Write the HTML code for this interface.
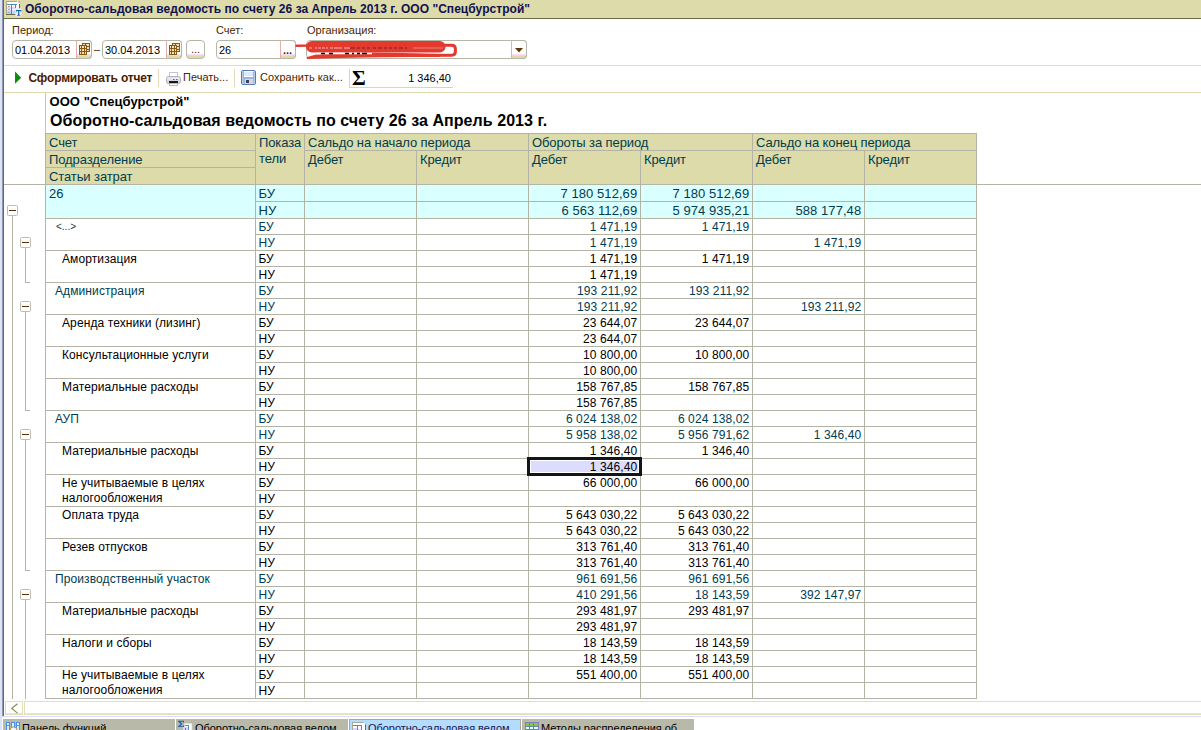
<!DOCTYPE html>
<html><head><meta charset="utf-8"><title>1C</title>
<style>
*{box-sizing:border-box;margin:0;padding:0}
html,body{width:1201px;height:730px;overflow:hidden;background:#fff}
body{font-family:"Liberation Sans",sans-serif;font-size:11px;color:#000;position:relative}
.a{position:absolute}
.t{position:absolute;white-space:nowrap;line-height:1}
.ui{color:#4a2600;font-size:11px}
.hl{position:absolute;height:1px;background:#b4b4a6}
.vl{position:absolute;width:1px;background:#b4b4a6}
.inp{position:absolute;border:1px solid #b6b6a6;border-radius:4px;background:#fff;height:19px}
.btn{position:absolute;border:1px solid #b6b6a6;border-left-color:#e4b0a8;border-radius:0 4px 4px 0;background:linear-gradient(#fff 0,#fff 76.4%,#ffd8fc 76.5%,#ffd8fc 82.3%,#ffd8b0 82.4%,#ffd8b0 88.2%,#dcdca8 88.3%,#dcdca8 100%)}
.btn2{position:absolute;border:1px solid #b6b6a6;border-radius:4px;background:linear-gradient(#fff 0,#fff 76.4%,#ffd8fc 76.5%,#ffd8fc 82.3%,#ffd8b0 82.4%,#ffd8b0 88.2%,#dcdca8 88.3%,#dcdca8 100%)}
.h{position:absolute;white-space:nowrap;line-height:1;font-size:13px;color:#003c50;letter-spacing:-0.1px}
.c{position:absolute;white-space:nowrap;line-height:1;font-size:12px}
.n{position:absolute;white-space:nowrap;line-height:1;font-size:12px;text-align:right;width:108px}
.g{color:#003c50}
.bx{position:absolute;width:11px;height:11px;border:1px solid #bebcac;border-radius:1.5px;background:#fff}
.bx i{position:absolute;left:1px;top:4px;width:7px;height:1px;background:#5a2d0a}
.tab{position:absolute;top:719px;height:11px;background:#b9b9a9}
.tab span{position:absolute;top:4px;white-space:nowrap;font-size:11px;line-height:1;color:#000;letter-spacing:-0.05px}
</style></head><body>

<div class="a" style="left:0;top:0;width:2px;height:716px;background:#d7e5f4"></div>
<div class="a" style="left:2px;top:0;width:1px;height:716px;background:#9494b4"></div>
<div class="a" style="left:3px;top:0;width:1px;height:716px;background:#6a6a50"></div>
<div class="a" style="left:4px;top:0;width:1197px;height:18px;background:#dcdba9"></div>
<div class="a" style="left:4px;top:18px;width:1197px;height:1px;background:#6e6d48"></div>
<div class="t" style="left:25px;top:3px;font-size:12px;font-weight:bold;color:#101050;letter-spacing:0.04px">Оборотно-сальдовая ведомость по счету 26 за Апрель 2013 г. ООО "Спецбурстрой"</div>
<svg class="a" style="left:4px;top:0px" width="20" height="18" viewBox="4 0 20 18">
<rect x="6" y="1" width="14" height="14" fill="#fff"/>
<rect x="6.5" y="1.5" width="13" height="13" fill="none" stroke="#aaa89a"/>
<rect x="7" y="7" width="9" height="2" fill="#dcd8ff"/><rect x="7" y="10" width="9" height="1" fill="#dcd8ff"/>
<rect x="7" y="11" width="9" height="3" fill="#b4e0ff"/>
<rect x="8" y="6" width="2" height="1" fill="#a8a898"/><rect x="8" y="9" width="2" height="1" fill="#a8a898"/><rect x="8" y="12" width="2" height="1" fill="#a8a898"/>
<rect x="7" y="4" width="10" height="1" fill="#5a8cb0"/>
<rect x="11" y="4" width="1" height="4" fill="#5a8cb0"/><rect x="11" y="8" width="1" height="6" fill="#7068c0"/>
<rect x="15" y="4" width="1" height="4" fill="#5a8cb0"/>
<rect x="6" y="14" width="9" height="1" fill="#6a6a48"/>
<path d="M17 1h1l2 2v1h-3z" fill="#fff"/><path d="M18 1.5l2 2" stroke="#8888c8" stroke-width="0.8"/>
<rect x="19" y="4" width="1" height="4" fill="#6a6a48"/>
<rect x="15.5" y="8.5" width="6" height="8" fill="#ece8ff"/>
<path d="M16 10h5.4v1.6h-0.8l-0.3-0.7h-1v3.9l0.9 0.3v0.6h-3v-0.6l0.9-0.3v-3.9h-1l-0.3 0.7h-0.8z" fill="#1068a8"/>
</svg>
<div class="t ui" style="left:12px;top:25px">Период:</div>
<div class="t ui" style="left:216px;top:25px">Счет:</div>
<div class="t ui" style="left:307px;top:25px">Организация:</div>
<div class="inp" style="left:12px;top:40px;width:80px"></div>
<div class="btn" style="left:76px;top:40px;width:16px;height:19px"></div>
<svg class="a" style="left:79px;top:43px" width="12" height="12" viewBox="0 0 12 12"><rect x="3.5" y="0.5" width="7" height="8" fill="#f3e2b8" stroke="#8a5a14"/><path d="M3 3.5h8M3 6.5h8M6.5 0v9" stroke="#8a5a14" stroke-width="1"/><rect x="0.5" y="2.5" width="7" height="9" fill="#f3e2b8" stroke="#8a5a14"/><path d="M0 5.5h8M0 8.5h8M2.5 3v9M5.5 3v9" stroke="#8a5a14" stroke-width="1"/></svg>
<div class="t" style="left:15px;top:45px;font-size:11px">01.04.2013</div>
<div class="t" style="left:94px;top:44px;font-size:11px;color:#4a2600">–</div>
<div class="inp" style="left:102px;top:40px;width:80px"></div>
<div class="btn" style="left:166px;top:40px;width:16px;height:19px"></div>
<svg class="a" style="left:169px;top:43px" width="12" height="12" viewBox="0 0 12 12"><rect x="3.5" y="0.5" width="7" height="8" fill="#f3e2b8" stroke="#8a5a14"/><path d="M3 3.5h8M3 6.5h8M6.5 0v9" stroke="#8a5a14" stroke-width="1"/><rect x="0.5" y="2.5" width="7" height="9" fill="#f3e2b8" stroke="#8a5a14"/><path d="M0 5.5h8M0 8.5h8M2.5 3v9M5.5 3v9" stroke="#8a5a14" stroke-width="1"/></svg>
<div class="t" style="left:105px;top:45px;font-size:11px">30.04.2013</div>
<div class="btn2" style="left:186px;top:40px;width:19px;height:19px"></div>
<div class="t ui" style="left:191px;top:44px">...</div>
<div class="inp" style="left:216px;top:40px;width:80px"></div>
<div class="btn" style="left:280px;top:40px;width:16px;height:19px"></div>
<div class="t ui" style="left:283px;top:45px;font-weight:bold">...</div>
<div class="t" style="left:219px;top:45px;font-size:11px">26</div>
<div class="inp" style="left:306px;top:40px;width:221px"></div>
<div class="btn" style="left:511px;top:40px;width:16px;height:19px"></div>
<svg class="a" style="left:515px;top:48px" width="8" height="5"><path d="M0 0h8l-4 4.5z" fill="#5a3a08"/></svg>
<svg class="a" style="left:290px;top:36px" width="175" height="26" viewBox="290 36 175 26">
<path d="M296.5 45.8 L309 45.6" stroke="#e33a2f" stroke-width="2.4" stroke-linecap="round" fill="none"/>
<path d="M311.8 46.75 L439.8 46.75" stroke="#e33a2f" stroke-width="11.5" stroke-linecap="round" fill="none"/>
<path d="M440 45.2 L451.5 45.2 Q455.4 45.2 455.4 49 L455.4 51.6 Q455.4 55.3 451.5 55.3 L416 55.4" stroke="#e33a2f" stroke-width="3" stroke-linejoin="round" fill="none"/>
<path d="M307 59 L306.5 57.2 L316 54.6 L370 52.6 L416 53.2 L440 54 L440 56.7 L380 57.2 L340 58 Z" fill="#e33a2f"/>
<path d="M316 53.6 H372" stroke="#fff" stroke-width="1.5" fill="none"/>
<path d="M321 53.6 h4 m4 0 h4 m12 0 h4 m3 0 h2 m3 0 h3 m2 0 h5" stroke="#100" stroke-width="1.5" fill="none"/>
<path d="M309 48 h3 m3 0 h2 m1 0 h3 m1 0 h3 m1 0 h2 m2 0 h3 m1 0 h8 m2 0 h6" stroke="#f2c4be" stroke-width="0.9" fill="none"/>
<path d="M350 48 h5 m2 0 h3 m2 0 h3 m2 0 h3 m3 0 h3 m2 0 h4 m2 0 h3 m2 0 h3 m2 0 h3 m2 0 h4 m2 0 h2" stroke="#6a1814" stroke-width="0.8" fill="none"/>
<path d="M413 48 H443" stroke="#f0b0a8" stroke-width="0.6" fill="none"/>
</svg>
<div class="a" style="left:4px;top:65px;width:1197px;height:1px;background:#d6d6f2"></div>
<svg class="a" style="left:14px;top:71px" width="8" height="14"><path d="M1 0.6v12.2l6.2-6.1z" fill="#0e8e0e"/></svg>
<div class="t" style="left:28.5px;top:72px;font-size:12px;font-weight:bold;color:#4a1c00;letter-spacing:-0.18px">Сформировать отчет</div>
<div class="a" style="left:158px;top:69px;width:1px;height:18px;background:#e4d8b8"></div>
<svg class="a" style="left:166px;top:72px" width="15" height="14" viewBox="0 0 15 14">
<rect x="3.5" y="0.5" width="8" height="5" fill="#fff" stroke="#c4c4cc"/>
<rect x="0.5" y="4.5" width="14" height="7" rx="2" fill="#d8d8e0" stroke="#b4b0bc"/>
<rect x="1.5" y="5.5" width="12" height="2" fill="#ececf2"/>
<rect x="3" y="9" width="9" height="2" fill="#181818"/>
<rect x="7" y="7" width="1.5" height="1" fill="#e03020"/><rect x="10" y="7" width="1.5" height="1" fill="#20a030"/>
<rect x="3.5" y="11.5" width="8" height="2" fill="#fff" stroke="#b8b8c8"/>
</svg>
<div class="t ui" style="left:183px;top:72px">Печать...</div>
<div class="a" style="left:234px;top:69px;width:1px;height:18px;background:#e4d8b8"></div>
<svg class="a" style="left:241px;top:70px" width="15" height="15" viewBox="0 0 15 15">
<rect x="0.5" y="0.5" width="14" height="14" rx="1.5" fill="#9ab4e0" stroke="#5a78b8"/>
<rect x="1.5" y="1.5" width="12" height="12" fill="none" stroke="#b8ccec"/>
<rect x="3" y="1" width="9" height="6" fill="#fff"/>
<rect x="3" y="2.5" width="9" height="1" fill="#b8d8f4"/><rect x="3" y="4.5" width="9" height="1" fill="#b8d8f4"/>
<rect x="4" y="9" width="8" height="5" fill="#d4d8e0"/>
<rect x="5" y="10" width="3" height="3" fill="#3a4458"/>
</svg>
<div class="t ui" style="left:260px;top:72px">Сохранить как...</div>
<div class="a" style="left:349px;top:69px;width:104px;height:19px;border-left:1px solid #dcd8a8;border-bottom:1px solid #dcd8a8"></div>
<div class="t" style="left:352px;top:68px;font-size:21px;font-weight:bold;font-family:'Liberation Serif',serif">Σ</div>
<div class="t" style="left:351px;top:73px;width:100px;text-align:right;font-size:11px">1 346,40</div>
<div class="a" style="left:4px;top:92px;width:1197px;height:1px;background:#dedcb0"></div>
<div class="t" style="left:49.5px;top:95px;font-size:13px;font-weight:bold;letter-spacing:0.05px">ООО "Спецбурстрой"</div>
<div class="t" style="left:50px;top:113px;font-size:16px;font-weight:bold;letter-spacing:0.06px">Оборотно-сальдовая ведомость по счету 26 за Апрель 2013 г.</div>
<div class="a" style="left:45px;top:133px;width:932px;height:52px;background:#dcdba9"></div>
<div class="a" style="left:45px;top:185px;width:932px;height:33px;background:#daffff"></div>
<div class="hl" style="left:45px;top:133px;width:932px"></div>
<div class="hl" style="left:45px;top:150px;width:210px"></div>
<div class="hl" style="left:304px;top:150px;width:673px"></div>
<div class="hl" style="left:45px;top:167px;width:210px"></div>
<div class="hl" style="left:4px;top:184px;width:1197px"></div>
<div class="hl" style="left:255px;top:201px;width:722px"></div>
<div class="c g" style="left:49px;top:187px;font-size:13px;letter-spacing:0.1px">26</div>
<div class="c g" style="left:258.5px;top:187px;font-size:13px">БУ</div>
<div class="n g" style="left:529.2px;top:187px;font-size:13px;letter-spacing:0.06px">7 180 512,69</div>
<div class="n g" style="left:641.2px;top:187px;font-size:13px;letter-spacing:0.06px">7 180 512,69</div>
<div class="hl" style="left:45px;top:218px;width:932px"></div>
<div class="c g" style="left:258.5px;top:204px;font-size:13px">НУ</div>
<div class="n g" style="left:529.2px;top:204px;font-size:13px;letter-spacing:0.06px">6 563 112,69</div>
<div class="n g" style="left:641.2px;top:204px;font-size:13px;letter-spacing:0.06px">5 974 935,21</div>
<div class="n g" style="left:753.2px;top:204px;font-size:13px;letter-spacing:0.06px">588 177,48</div>
<div class="hl" style="left:255px;top:234px;width:722px"></div>
<div class="c g" style="left:56px;top:222px;font-size:10px">&lt;...&gt;</div>
<div class="c g" style="left:258.5px;top:221px;font-size:12px">БУ</div>
<div class="n g" style="left:529.4px;top:221px;font-size:12px;letter-spacing:0.12px">1 471,19</div>
<div class="n g" style="left:641.4px;top:221px;font-size:12px;letter-spacing:0.12px">1 471,19</div>
<div class="hl" style="left:45px;top:250px;width:932px"></div>
<div class="c g" style="left:258.5px;top:237px;font-size:12px">НУ</div>
<div class="n g" style="left:529.4px;top:237px;font-size:12px;letter-spacing:0.12px">1 471,19</div>
<div class="n g" style="left:753.4px;top:237px;font-size:12px;letter-spacing:0.12px">1 471,19</div>
<div class="hl" style="left:255px;top:266px;width:722px"></div>
<div class="c " style="left:62px;top:253px;font-size:12px;letter-spacing:0.1px">Амортизация</div>
<div class="c " style="left:258.5px;top:253px;font-size:12px">БУ</div>
<div class="n " style="left:529.4px;top:253px;font-size:12px;letter-spacing:0.12px">1 471,19</div>
<div class="n " style="left:641.4px;top:253px;font-size:12px;letter-spacing:0.12px">1 471,19</div>
<div class="hl" style="left:45px;top:282px;width:932px"></div>
<div class="c " style="left:258.5px;top:269px;font-size:12px">НУ</div>
<div class="n " style="left:529.4px;top:269px;font-size:12px;letter-spacing:0.12px">1 471,19</div>
<div class="hl" style="left:255px;top:298px;width:722px"></div>
<div class="c g" style="left:55px;top:285px;font-size:12px;letter-spacing:0.1px">Администрация</div>
<div class="c g" style="left:258.5px;top:285px;font-size:12px">БУ</div>
<div class="n g" style="left:529.4px;top:285px;font-size:12px;letter-spacing:0.12px">193 211,92</div>
<div class="n g" style="left:641.4px;top:285px;font-size:12px;letter-spacing:0.12px">193 211,92</div>
<div class="hl" style="left:45px;top:314px;width:932px"></div>
<div class="c g" style="left:258.5px;top:301px;font-size:12px">НУ</div>
<div class="n g" style="left:529.4px;top:301px;font-size:12px;letter-spacing:0.12px">193 211,92</div>
<div class="n g" style="left:753.4px;top:301px;font-size:12px;letter-spacing:0.12px">193 211,92</div>
<div class="hl" style="left:255px;top:330px;width:722px"></div>
<div class="c " style="left:62px;top:317px;font-size:12px;letter-spacing:0.1px">Аренда техники (лизинг)</div>
<div class="c " style="left:258.5px;top:317px;font-size:12px">БУ</div>
<div class="n " style="left:529.4px;top:317px;font-size:12px;letter-spacing:0.12px">23 644,07</div>
<div class="n " style="left:641.4px;top:317px;font-size:12px;letter-spacing:0.12px">23 644,07</div>
<div class="hl" style="left:45px;top:346px;width:932px"></div>
<div class="c " style="left:258.5px;top:333px;font-size:12px">НУ</div>
<div class="n " style="left:529.4px;top:333px;font-size:12px;letter-spacing:0.12px">23 644,07</div>
<div class="hl" style="left:255px;top:362px;width:722px"></div>
<div class="c " style="left:62px;top:349px;font-size:12px;letter-spacing:0.1px">Консультационные услуги</div>
<div class="c " style="left:258.5px;top:349px;font-size:12px">БУ</div>
<div class="n " style="left:529.4px;top:349px;font-size:12px;letter-spacing:0.12px">10 800,00</div>
<div class="n " style="left:641.4px;top:349px;font-size:12px;letter-spacing:0.12px">10 800,00</div>
<div class="hl" style="left:45px;top:378px;width:932px"></div>
<div class="c " style="left:258.5px;top:365px;font-size:12px">НУ</div>
<div class="n " style="left:529.4px;top:365px;font-size:12px;letter-spacing:0.12px">10 800,00</div>
<div class="hl" style="left:255px;top:394px;width:722px"></div>
<div class="c " style="left:62px;top:381px;font-size:12px;letter-spacing:0.1px">Материальные расходы</div>
<div class="c " style="left:258.5px;top:381px;font-size:12px">БУ</div>
<div class="n " style="left:529.4px;top:381px;font-size:12px;letter-spacing:0.12px">158 767,85</div>
<div class="n " style="left:641.4px;top:381px;font-size:12px;letter-spacing:0.12px">158 767,85</div>
<div class="hl" style="left:45px;top:410px;width:932px"></div>
<div class="c " style="left:258.5px;top:397px;font-size:12px">НУ</div>
<div class="n " style="left:529.4px;top:397px;font-size:12px;letter-spacing:0.12px">158 767,85</div>
<div class="hl" style="left:255px;top:426px;width:722px"></div>
<div class="c g" style="left:55px;top:413px;font-size:12px;letter-spacing:0.1px">АУП</div>
<div class="c g" style="left:258.5px;top:413px;font-size:12px">БУ</div>
<div class="n g" style="left:529.4px;top:413px;font-size:12px;letter-spacing:0.12px">6 024 138,02</div>
<div class="n g" style="left:641.4px;top:413px;font-size:12px;letter-spacing:0.12px">6 024 138,02</div>
<div class="hl" style="left:45px;top:442px;width:932px"></div>
<div class="c g" style="left:258.5px;top:429px;font-size:12px">НУ</div>
<div class="n g" style="left:529.4px;top:429px;font-size:12px;letter-spacing:0.12px">5 958 138,02</div>
<div class="n g" style="left:641.4px;top:429px;font-size:12px;letter-spacing:0.12px">5 956 791,62</div>
<div class="n g" style="left:753.4px;top:429px;font-size:12px;letter-spacing:0.12px">1 346,40</div>
<div class="hl" style="left:255px;top:458px;width:722px"></div>
<div class="c " style="left:62px;top:445px;font-size:12px;letter-spacing:0.1px">Материальные расходы</div>
<div class="c " style="left:258.5px;top:445px;font-size:12px">БУ</div>
<div class="n " style="left:529.4px;top:445px;font-size:12px;letter-spacing:0.12px">1 346,40</div>
<div class="n " style="left:641.4px;top:445px;font-size:12px;letter-spacing:0.12px">1 346,40</div>
<div class="hl" style="left:45px;top:474px;width:932px"></div>
<div class="c " style="left:258.5px;top:461px;font-size:12px">НУ</div>
<div class="hl" style="left:255px;top:490px;width:722px"></div>
<div class="c " style="left:62px;top:477px;font-size:12px;letter-spacing:0.1px">Не учитываемые в целях</div>
<div class="c " style="left:258.5px;top:477px;font-size:12px">БУ</div>
<div class="n " style="left:529.4px;top:477px;font-size:12px;letter-spacing:0.12px">66 000,00</div>
<div class="n " style="left:641.4px;top:477px;font-size:12px;letter-spacing:0.12px">66 000,00</div>
<div class="hl" style="left:45px;top:506px;width:932px"></div>
<div class="c " style="left:62px;top:492px;font-size:12px;letter-spacing:0.1px">налогообложения</div>
<div class="c " style="left:258.5px;top:493px;font-size:12px">НУ</div>
<div class="hl" style="left:255px;top:522px;width:722px"></div>
<div class="c " style="left:62px;top:509px;font-size:12px;letter-spacing:0.1px">Оплата труда</div>
<div class="c " style="left:258.5px;top:509px;font-size:12px">БУ</div>
<div class="n " style="left:529.4px;top:509px;font-size:12px;letter-spacing:0.12px">5 643 030,22</div>
<div class="n " style="left:641.4px;top:509px;font-size:12px;letter-spacing:0.12px">5 643 030,22</div>
<div class="hl" style="left:45px;top:538px;width:932px"></div>
<div class="c " style="left:258.5px;top:525px;font-size:12px">НУ</div>
<div class="n " style="left:529.4px;top:525px;font-size:12px;letter-spacing:0.12px">5 643 030,22</div>
<div class="n " style="left:641.4px;top:525px;font-size:12px;letter-spacing:0.12px">5 643 030,22</div>
<div class="hl" style="left:255px;top:554px;width:722px"></div>
<div class="c " style="left:62px;top:541px;font-size:12px;letter-spacing:0.1px">Резев отпусков</div>
<div class="c " style="left:258.5px;top:541px;font-size:12px">БУ</div>
<div class="n " style="left:529.4px;top:541px;font-size:12px;letter-spacing:0.12px">313 761,40</div>
<div class="n " style="left:641.4px;top:541px;font-size:12px;letter-spacing:0.12px">313 761,40</div>
<div class="hl" style="left:45px;top:570px;width:932px"></div>
<div class="c " style="left:258.5px;top:557px;font-size:12px">НУ</div>
<div class="n " style="left:529.4px;top:557px;font-size:12px;letter-spacing:0.12px">313 761,40</div>
<div class="n " style="left:641.4px;top:557px;font-size:12px;letter-spacing:0.12px">313 761,40</div>
<div class="hl" style="left:255px;top:586px;width:722px"></div>
<div class="c g" style="left:55px;top:573px;font-size:12px;letter-spacing:0.1px">Производственный участок</div>
<div class="c g" style="left:258.5px;top:573px;font-size:12px">БУ</div>
<div class="n g" style="left:529.4px;top:573px;font-size:12px;letter-spacing:0.12px">961 691,56</div>
<div class="n g" style="left:641.4px;top:573px;font-size:12px;letter-spacing:0.12px">961 691,56</div>
<div class="hl" style="left:45px;top:602px;width:932px"></div>
<div class="c g" style="left:258.5px;top:589px;font-size:12px">НУ</div>
<div class="n g" style="left:529.4px;top:589px;font-size:12px;letter-spacing:0.12px">410 291,56</div>
<div class="n g" style="left:641.4px;top:589px;font-size:12px;letter-spacing:0.12px">18 143,59</div>
<div class="n g" style="left:753.4px;top:589px;font-size:12px;letter-spacing:0.12px">392 147,97</div>
<div class="hl" style="left:255px;top:618px;width:722px"></div>
<div class="c " style="left:62px;top:605px;font-size:12px;letter-spacing:0.1px">Материальные расходы</div>
<div class="c " style="left:258.5px;top:605px;font-size:12px">БУ</div>
<div class="n " style="left:529.4px;top:605px;font-size:12px;letter-spacing:0.12px">293 481,97</div>
<div class="n " style="left:641.4px;top:605px;font-size:12px;letter-spacing:0.12px">293 481,97</div>
<div class="hl" style="left:45px;top:634px;width:932px"></div>
<div class="c " style="left:258.5px;top:621px;font-size:12px">НУ</div>
<div class="n " style="left:529.4px;top:621px;font-size:12px;letter-spacing:0.12px">293 481,97</div>
<div class="hl" style="left:255px;top:650px;width:722px"></div>
<div class="c " style="left:62px;top:637px;font-size:12px;letter-spacing:0.1px">Налоги и сборы</div>
<div class="c " style="left:258.5px;top:637px;font-size:12px">БУ</div>
<div class="n " style="left:529.4px;top:637px;font-size:12px;letter-spacing:0.12px">18 143,59</div>
<div class="n " style="left:641.4px;top:637px;font-size:12px;letter-spacing:0.12px">18 143,59</div>
<div class="hl" style="left:45px;top:666px;width:932px"></div>
<div class="c " style="left:258.5px;top:653px;font-size:12px">НУ</div>
<div class="n " style="left:529.4px;top:653px;font-size:12px;letter-spacing:0.12px">18 143,59</div>
<div class="n " style="left:641.4px;top:653px;font-size:12px;letter-spacing:0.12px">18 143,59</div>
<div class="hl" style="left:255px;top:682px;width:722px"></div>
<div class="c " style="left:62px;top:669px;font-size:12px;letter-spacing:0.1px">Не учитываемые в целях</div>
<div class="c " style="left:258.5px;top:669px;font-size:12px">БУ</div>
<div class="n " style="left:529.4px;top:669px;font-size:12px;letter-spacing:0.12px">551 400,00</div>
<div class="n " style="left:641.4px;top:669px;font-size:12px;letter-spacing:0.12px">551 400,00</div>
<div class="hl" style="left:45px;top:698px;width:932px"></div>
<div class="c " style="left:62px;top:684px;font-size:12px;letter-spacing:0.1px">налогообложения</div>
<div class="c " style="left:258.5px;top:685px;font-size:12px">НУ</div>
<div class="vl" style="left:45px;top:93px;height:40px;background:#c6c6a6"></div>
<div class="vl" style="left:45px;top:133px;height:566px"></div>
<div class="vl" style="left:255px;top:133px;height:566px"></div>
<div class="vl" style="left:304px;top:133px;height:566px"></div>
<div class="vl" style="left:416px;top:150px;height:549px"></div>
<div class="vl" style="left:528px;top:133px;height:566px"></div>
<div class="vl" style="left:640px;top:150px;height:549px"></div>
<div class="vl" style="left:752px;top:133px;height:566px"></div>
<div class="vl" style="left:864px;top:150px;height:549px"></div>
<div class="vl" style="left:976px;top:133px;height:566px"></div>
<div class="a" style="left:527px;top:457px;width:115px;height:19px;background:#dcdcff;border:3px solid #14141c;box-shadow:inset 0 0 0 1px #fff"></div>
<div class="n " style="left:529.4px;top:461px;font-size:12px;letter-spacing:0.12px">1 346,40</div>
<div class="h" style="left:49px;top:136px">Счет</div>
<div class="h" style="left:49px;top:153px">Подразделение</div>
<div class="h" style="left:49px;top:170px">Статьи затрат</div>
<div class="h" style="left:259px;top:136px">Показа</div>
<div class="h" style="left:259px;top:152px">тели</div>
<div class="h" style="left:308px;top:136px">Сальдо на начало периода</div>
<div class="h" style="left:308px;top:153px">Дебет</div>
<div class="h" style="left:420px;top:153px">Кредит</div>
<div class="h" style="left:532px;top:136px">Обороты за период</div>
<div class="h" style="left:532px;top:153px">Дебет</div>
<div class="h" style="left:644px;top:153px">Кредит</div>
<div class="h" style="left:756px;top:136px">Сальдо на конец периода</div>
<div class="h" style="left:756px;top:153px">Дебет</div>
<div class="h" style="left:868px;top:153px">Кредит</div>
<div class="vl" style="left:12px;top:216px;height:484px"></div>
<div class="bx" style="left:7px;top:205px"><i></i></div>
<div class="bx" style="left:20px;top:237px"><i></i></div>
<div class="vl" style="left:25px;top:248px;height:34px"></div>
<div class="hl" style="left:25px;top:282px;width:5px"></div>
<div class="bx" style="left:20px;top:301px"><i></i></div>
<div class="vl" style="left:25px;top:312px;height:98px"></div>
<div class="hl" style="left:25px;top:410px;width:5px"></div>
<div class="bx" style="left:20px;top:429px"><i></i></div>
<div class="vl" style="left:25px;top:440px;height:130px"></div>
<div class="hl" style="left:25px;top:570px;width:5px"></div>
<div class="bx" style="left:20px;top:589px"><i></i></div>
<div class="vl" style="left:25px;top:600px;height:100px"></div>
<div class="a" style="left:4px;top:699px;width:1197px;height:20px;background:#fff"></div>
<div class="a" style="left:5px;top:701px;width:18px;height:14px;border:1px solid #e2e0b8;background:#fff"><div class="a" style="left:0;bottom:0;width:16px;height:1px;background:#f8d6ec"></div></div>
<svg class="a" style="left:11px;top:703px" width="8" height="11"><path d="M6.5 0.7L0.8 5.4l5.7 4.7" stroke="#8a8a52" stroke-width="1.2" fill="none"/></svg>
<div class="a" style="left:24px;top:701px;width:1177px;height:14px;border:1px solid #e2e0b8;border-right:none;background:#fff"><div class="a" style="left:0;bottom:0;width:1176px;height:1px;background:#f8d6ec"></div></div>
<div class="a" style="left:0;top:716px;width:1201px;height:1px;background:#dcdcfa"></div>
<div class="a" style="left:0;top:717px;width:1201px;height:2px;background:#fff"></div>
<div class="tab" style="left:3px;width:172px"><svg class="a" style="left:3px;top:3px" width="15" height="8"><rect x="0" y="0" width="4" height="8" fill="#4a90ee"/><rect x="5" y="0" width="4" height="8" fill="#4a90ee"/><rect x="10" y="0" width="4" height="8" fill="#4a90ee"/><rect x="1" y="1" width="2" height="7" fill="#d4f0ff"/><rect x="6" y="1" width="2" height="7" fill="#d4f0ff"/><rect x="11" y="1" width="2" height="7" fill="#d4f0ff"/><rect x="1" y="3" width="2" height="1" fill="#e07040"/><rect x="11" y="3" width="2" height="1" fill="#e07040"/><circle cx="7.5" cy="8.5" r="3.6" fill="#e8f4ff" stroke="#c09038" stroke-width="1"/></svg><span style="left:19px">Панель функций</span></div>
<div class="tab" style="left:176px;width:172px"><svg class="a" style="left:1px;top:1px" width="17" height="10" viewBox="177 720 17 10"><rect x="184" y="723" width="8" height="7" fill="#fff"/><rect x="184.5" y="723.5" width="7.5" height="7" fill="none" stroke="#c8c8c0" stroke-width="0.6"/><rect x="185" y="725" width="4" height="1" fill="#5a8cb0"/><rect x="188" y="725" width="1" height="5" fill="#5a8cb0"/><rect x="183" y="727" width="5" height="3" fill="#d8d4ff"/><rect x="185" y="728" width="1" height="2" fill="#7068c0"/><path d="M178 720.8h6v1.6h-0.8l-0.4-0.7h-2.6l2.2 2.2-2.2 2.3h2.7l0.5-0.8h0.7v1.7h-6.2v-0.6l2.8-2.6-2.7-2.5z" fill="#1a5fb4"/></svg><span style="left:19px">Оборотно-сальдовая ведом...</span></div>
<div class="tab" style="left:349px;width:172px;background:#b4dcff;border-left:1px solid #a8a898;border-top:1px solid #a8a898;border-right:1px solid #a8a898"><svg class="a" style="left:2px;top:2px" width="15" height="8" viewBox="352 722 15 8"><rect x="352.5" y="722.5" width="13" height="9" fill="#fff" stroke="#a8a898"/><rect x="353" y="725" width="9" height="1" fill="#5a8cb0"/><rect x="357" y="725" width="1" height="5" fill="#5a8cb0"/><rect x="361" y="725" width="1" height="5" fill="#5a8cb0"/><rect x="353" y="728" width="4" height="2" fill="#d8d4ff"/><rect x="358" y="729" width="3" height="1" fill="#d8d4ff"/><rect x="365" y="724" width="1" height="6" fill="#6a6a50"/><path d="M363 722h3v3z" fill="#b4dcff"/></svg><span style="left:18px;top:3px;color:#1a1450">Оборотно-сальдовая ведом...</span></div>
<div class="tab" style="left:522px;width:172px"><svg class="a" style="left:3px;top:3px" width="14" height="8" viewBox="525 722 14 8"><rect x="525.5" y="722.5" width="13" height="9" fill="#5a88b0" stroke="#8080c0"/><rect x="526" y="723" width="3" height="3" fill="#8cc830"/><rect x="530" y="723" width="3" height="3" fill="#8cc830"/><rect x="534" y="723" width="4" height="3" fill="#8cc830"/><rect x="526" y="727" width="3" height="2" fill="#e8ffff"/><rect x="530" y="727" width="3" height="2" fill="#fff"/><rect x="534" y="727" width="4" height="2" fill="#e8ffff"/></svg><span style="left:19px">Методы распределения об...</span></div>
<div class="a" style="left:0;top:716px;width:2px;height:14px;background:#d7e5f4"></div>
</body></html>
